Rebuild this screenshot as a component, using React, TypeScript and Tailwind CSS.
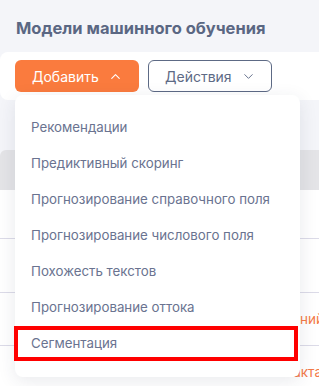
import React from 'react';
import { ChevronDown, ChevronUp } from 'lucide-react';

const menuItems = [
    'Рекомендации',
    'Предиктивный скоринг',
    'Прогнозирование справочного поля',
    'Прогнозирование числового поля',
    'Похожесть текстов',
    'Прогнозирование оттока',
    'Сегментация',
];

const App = () => {
    return (
        <div className="relative w-[319px] h-[386px] overflow-hidden bg-[#f4f5f9] font-['Inter',sans-serif]">
            <h1 className="pl-4 pt-[17px] h-[52px] text-[16.5px] font-bold leading-[22px] text-[#5a6783] whitespace-nowrap">
                Модели машинного обучения
            </h1>

            {/* toolbar */}
            <div className="h-[48px] bg-white rounded-l-lg flex items-start pt-2 pl-[15px] gap-[9px]">
                <button className="h-8 w-[124px] rounded-md bg-[#fa7b3e] text-white text-[14px] flex items-center pl-[17px] gap-[9px]">
                    Добавить
                    <ChevronUp size={15} strokeWidth={1.75} />
                </button>
                <button className="h-8 w-[124px] rounded-md border border-[#5d6a85] text-[#5d6a85] text-[14px] flex items-center pl-4 gap-[9px]">
                    Действия
                    <ChevronDown size={15} strokeWidth={1.5} />
                </button>
            </div>

            {/* table behind the menu */}
            <div className="mt-[50px]">
                <div className="h-10 bg-[#e4e4e7] rounded-tl-md" />
                <div className="h-[49px] bg-white border-b border-[#dcdbe8]" />
                <div className="h-[54px] bg-white border-b border-[#dcdbe8]" />
                <div className="h-[53px] bg-white border-b border-[#dcdbe8] flex items-center pl-[300px] overflow-hidden">
                    <div className="flex-1 flex justify-end overflow-hidden">
                        <span className="whitespace-nowrap text-[13.5px] text-[#f47a48] mr-[-5px]">наименований</span>
                    </div>
                </div>
                <div className="h-[53px] bg-white flex items-center pl-[290px] overflow-hidden">
                    <div className="flex-1 flex justify-end overflow-hidden">
                        <span className="whitespace-nowrap text-[13.5px] text-[#f47a48] mr-[-3px]">контакта</span>
                    </div>
                </div>
            </div>

            {/* dropdown menu */}
            <div className="absolute left-[15px] top-[95px] w-[285px] h-[282px] bg-white rounded-lg shadow-[0_4px_18px_rgba(40,45,80,0.10)] pt-[15px]">
                {menuItems.map((item) => (
                    <div key={item} className="h-9 flex items-center pl-4 text-[13.3px] text-[#6a7390] whitespace-nowrap">
                        {item}
                    </div>
                ))}
            </div>

            {/* highlight */}
            <div className="absolute left-[14px] top-[326px] w-[284px] h-[35px] border-4 border-[#ff0000]" />
        </div>
    );
};

export default App;
